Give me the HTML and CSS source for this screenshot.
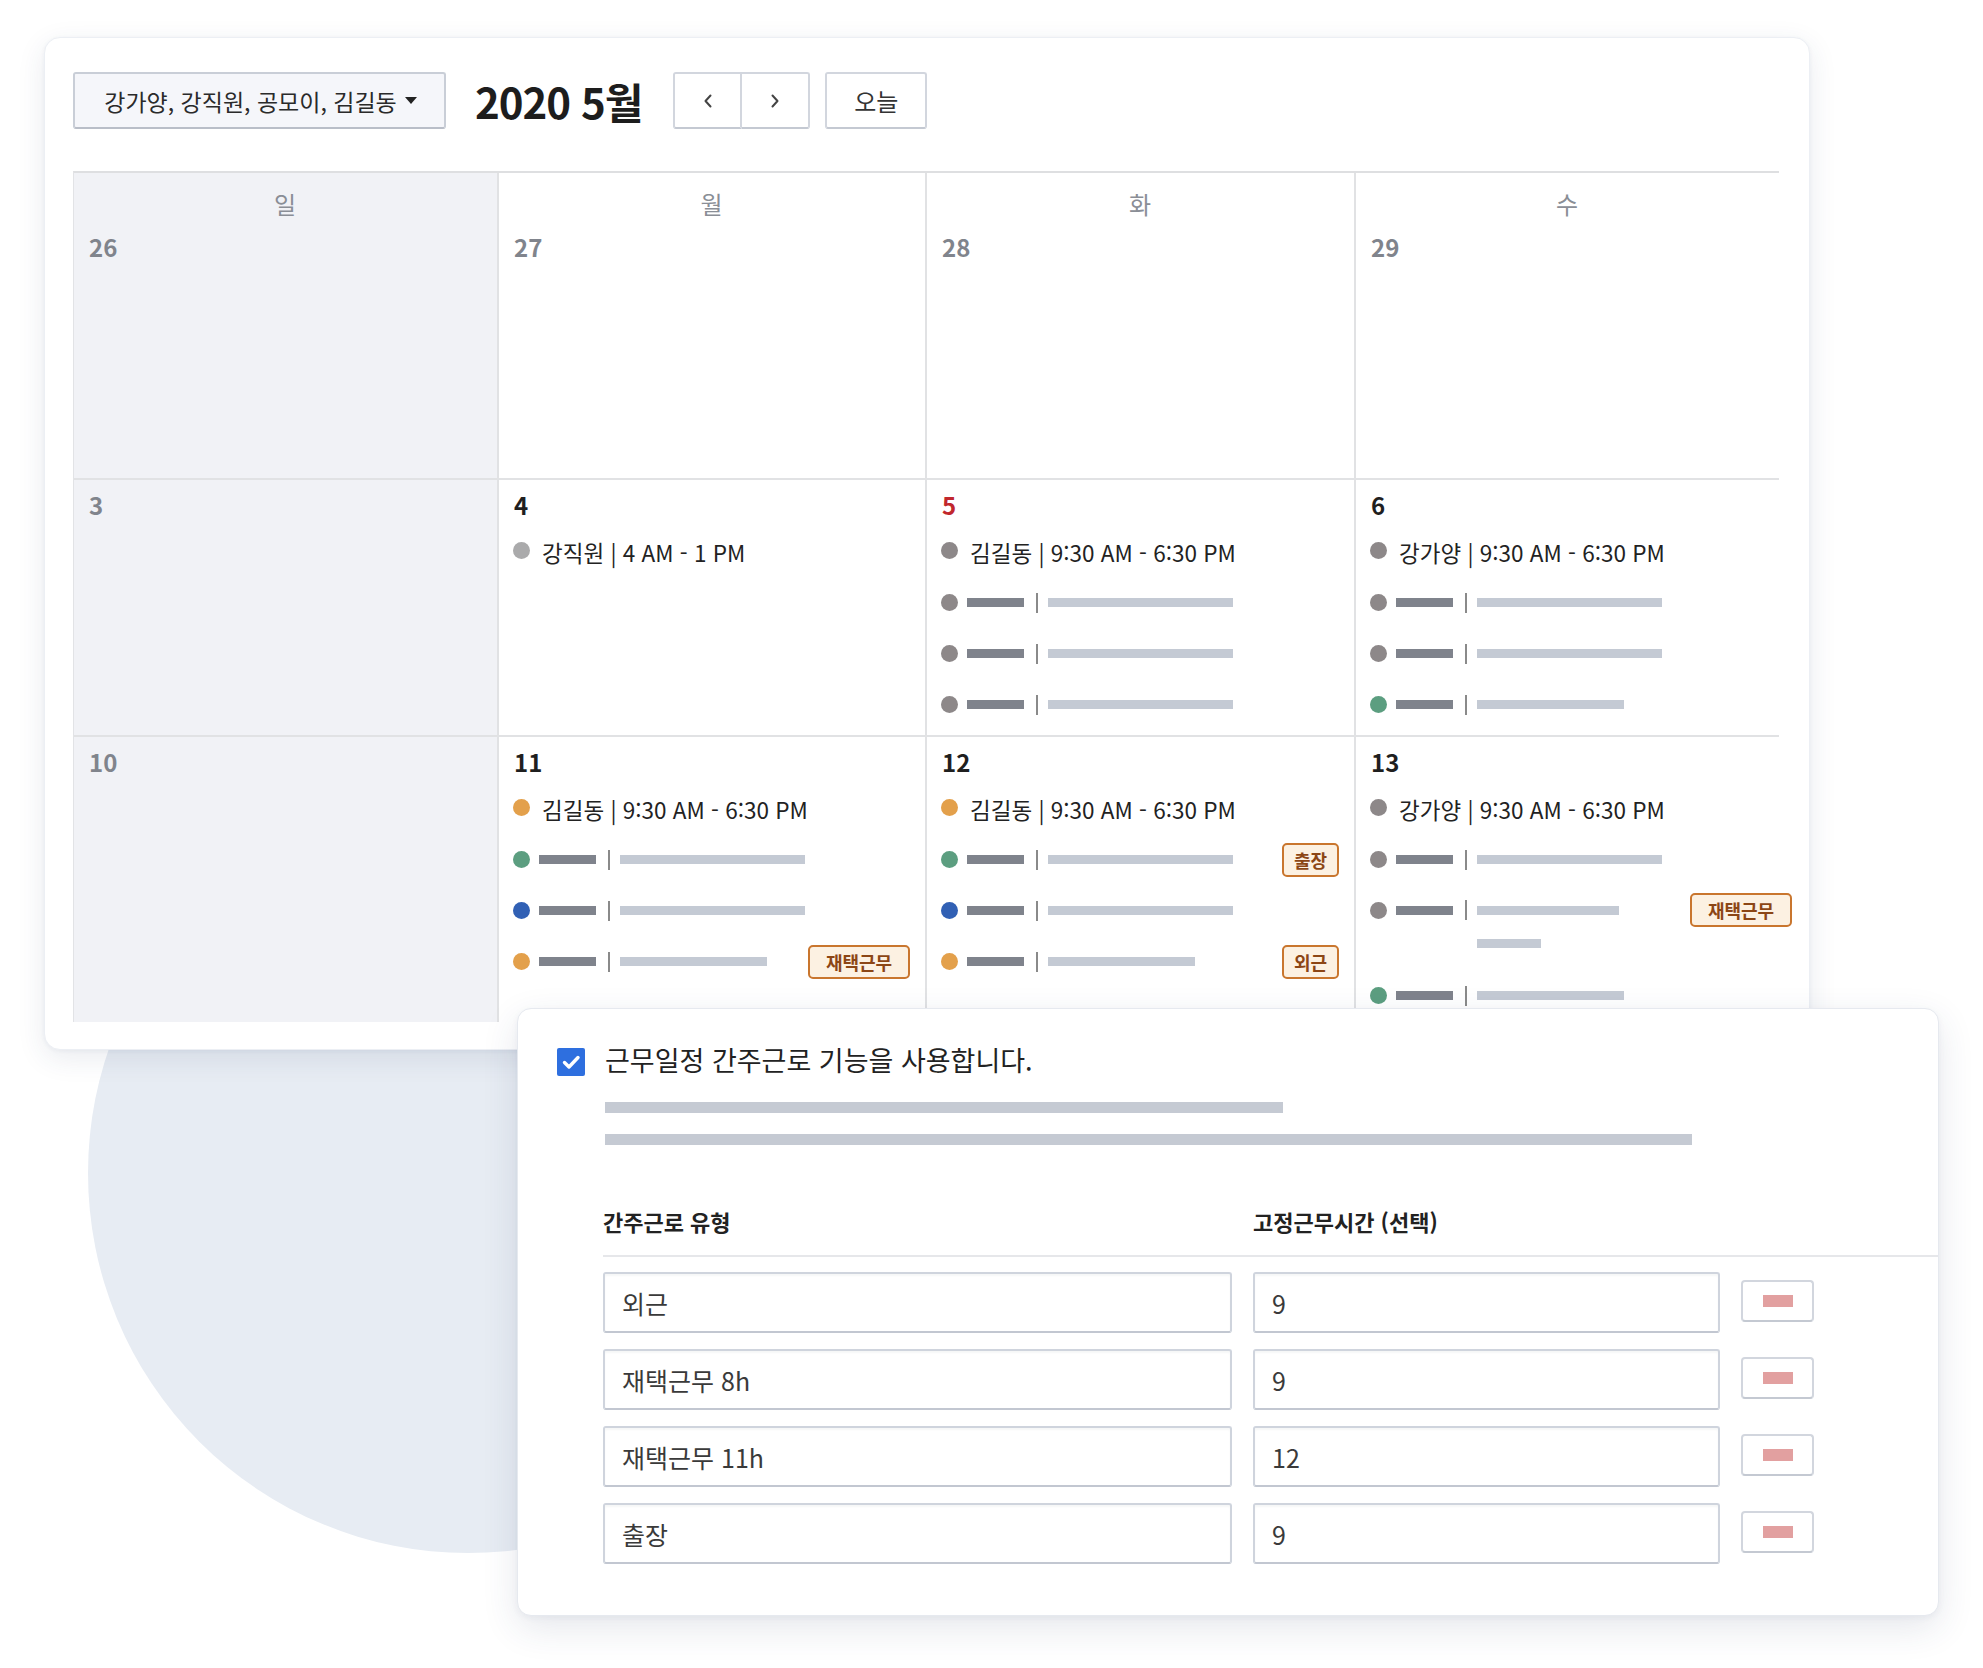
FILE: index.html
```html
<!DOCTYPE html>
<html lang="ko">
<head>
<meta charset="utf-8">
<title>근무일정 캘린더</title>
<link rel="stylesheet" href="styles.css">
</head>
<body>
<div class="stage">
  <div class="bg-circle"></div>

  <section class="calendar">
    <div class="toolbar">
      <button class="member-select">강가양, 강직원, 공모이, 김길동<svg class="caret" viewBox="0 0 12 8" width="12" height="8"><path d="M0 0 H12 L6 7 Z" fill="#222"/></svg></button>
      <h1 class="month-title">2020 5월</h1>
      <div class="nav-group">
        <button class="nav-btn"><svg viewBox="0 0 10 16" width="10" height="16"><polyline points="7.5,2.5 2.5,8 7.5,13.5" fill="none" stroke="#444" stroke-width="2" stroke-linecap="round" stroke-linejoin="round"/></svg></button>
        <button class="nav-btn"><svg viewBox="0 0 10 16" width="10" height="16"><polyline points="2.5,2.5 7.5,8 2.5,13.5" fill="none" stroke="#444" stroke-width="2" stroke-linecap="round" stroke-linejoin="round"/></svg></button>
      </div>
      <button class="today-btn">오늘</button>
    </div>

    <div class="month-grid">
      <!-- week 1 -->
      <div class="cell cell--sun cell--first">
        <div class="dow">일</div>
        <div class="date date--muted">26</div>
      </div>
      <div class="cell cell--first">
        <div class="dow">월</div>
        <div class="date date--muted">27</div>
      </div>
      <div class="cell cell--first">
        <div class="dow">화</div>
        <div class="date date--muted">28</div>
      </div>
      <div class="cell cell--first cell--last-col">
        <div class="dow">수</div>
        <div class="date date--muted">29</div>
      </div>

      <!-- week 2 -->
      <div class="cell cell--sun">
        <div class="date date--muted">3</div>
      </div>
      <div class="cell">
        <div class="date">4</div>
        <div class="events">
          <div class="event event--text"><span class="dot dot--light"></span><span class="event-text">강직원 | 4 AM - 1 PM</span></div>
        </div>
      </div>
      <div class="cell">
        <div class="date date--holiday">5</div>
        <div class="events">
          <div class="event event--text"><span class="dot dot--gray"></span><span class="event-text">김길동 | 9:30 AM - 6:30 PM</span></div>
          <div class="event"><span class="dot dot--gray"></span><span class="bar-dark"></span><span class="sep"></span><span class="bar-light bar-light--long"></span></div>
          <div class="event"><span class="dot dot--gray"></span><span class="bar-dark"></span><span class="sep"></span><span class="bar-light bar-light--long"></span></div>
          <div class="event"><span class="dot dot--gray"></span><span class="bar-dark"></span><span class="sep"></span><span class="bar-light bar-light--long"></span></div>
        </div>
      </div>
      <div class="cell cell--last-col">
        <div class="date">6</div>
        <div class="events">
          <div class="event event--text"><span class="dot dot--gray"></span><span class="event-text">강가양 | 9:30 AM - 6:30 PM</span></div>
          <div class="event"><span class="dot dot--gray"></span><span class="bar-dark"></span><span class="sep"></span><span class="bar-light bar-light--long"></span></div>
          <div class="event"><span class="dot dot--gray"></span><span class="bar-dark"></span><span class="sep"></span><span class="bar-light bar-light--long"></span></div>
          <div class="event"><span class="dot dot--green"></span><span class="bar-dark"></span><span class="sep"></span><span class="bar-light bar-light--mid"></span></div>
        </div>
      </div>

      <!-- week 3 -->
      <div class="cell cell--sun cell--last-row">
        <div class="date date--muted">10</div>
      </div>
      <div class="cell cell--last-row">
        <div class="date">11</div>
        <div class="events">
          <div class="event event--text"><span class="dot dot--orange"></span><span class="event-text">김길동 | 9:30 AM - 6:30 PM</span></div>
          <div class="event"><span class="dot dot--green"></span><span class="bar-dark"></span><span class="sep"></span><span class="bar-light bar-light--long"></span></div>
          <div class="event"><span class="dot dot--blue"></span><span class="bar-dark"></span><span class="sep"></span><span class="bar-light bar-light--long"></span></div>
          <div class="event"><span class="dot dot--orange"></span><span class="bar-dark"></span><span class="sep"></span><span class="bar-light bar-light--mid"></span><span class="badge badge--wide">재택근무</span></div>
        </div>
      </div>
      <div class="cell cell--last-row">
        <div class="date">12</div>
        <div class="events">
          <div class="event event--text"><span class="dot dot--orange"></span><span class="event-text">김길동 | 9:30 AM - 6:30 PM</span></div>
          <div class="event"><span class="dot dot--green"></span><span class="bar-dark"></span><span class="sep"></span><span class="bar-light bar-light--long"></span><span class="badge">출장</span></div>
          <div class="event"><span class="dot dot--blue"></span><span class="bar-dark"></span><span class="sep"></span><span class="bar-light bar-light--long"></span></div>
          <div class="event"><span class="dot dot--orange"></span><span class="bar-dark"></span><span class="sep"></span><span class="bar-light bar-light--mid"></span><span class="badge">외근</span></div>
        </div>
      </div>
      <div class="cell cell--last-row cell--last-col">
        <div class="date">13</div>
        <div class="events">
          <div class="event event--text"><span class="dot dot--gray"></span><span class="event-text">강가양 | 9:30 AM - 6:30 PM</span></div>
          <div class="event"><span class="dot dot--gray"></span><span class="bar-dark"></span><span class="sep"></span><span class="bar-light bar-light--long"></span></div>
          <div class="event event--wrap"><span class="dot dot--gray"></span><span class="bar-dark"></span><span class="sep"></span><span class="bar-stack"><span class="bar-light bar-light--short"></span><span class="bar-light bar-light--tiny"></span></span><span class="badge badge--wide badge--overflow">재택근무</span></div>
          <div class="event"><span class="dot dot--green"></span><span class="bar-dark"></span><span class="sep"></span><span class="bar-light bar-light--mid"></span></div>
        </div>
      </div>
    </div>
  </section>

  <section class="setting-panel">
    <label class="check-row">
      <span class="checkbox"><svg viewBox="0 0 28 28" width="28" height="28"><path d="M7.5 14.5 L12 19 L21 9.5" fill="none" stroke="#fff" stroke-width="3.4" stroke-linecap="round" stroke-linejoin="round"/></svg></span>
      <span class="check-label">근무일정 간주근로 기능을 사용합니다.</span>
    </label>
    <div class="desc-bars">
      <span class="desc-bar desc-bar--one"></span>
      <span class="desc-bar desc-bar--two"></span>
    </div>

    <div class="type-table">
      <div class="type-head">
        <span>간주근로 유형</span>
        <span>고정근무시간 (선택)</span>
      </div>
      <div class="type-rows">
        <div class="type-row">
          <div class="field">외근</div>
          <div class="field">9</div>
          <button class="remove-btn"><span class="remove-mark"></span></button>
        </div>
        <div class="type-row">
          <div class="field">재택근무 8h</div>
          <div class="field">9</div>
          <button class="remove-btn"><span class="remove-mark"></span></button>
        </div>
        <div class="type-row">
          <div class="field">재택근무 11h</div>
          <div class="field">12</div>
          <button class="remove-btn"><span class="remove-mark"></span></button>
        </div>
        <div class="type-row">
          <div class="field">출장</div>
          <div class="field">9</div>
          <button class="remove-btn"><span class="remove-mark"></span></button>
        </div>
      </div>
    </div>
  </section>
</div>
</body>
</html>
```

FILE: styles.css
```css
* { box-sizing: border-box; }

html, body {
  margin: 0;
  padding: 0;
  width: 1983px;
  height: 1668px;
  overflow: hidden;
  background: #ffffff;
  font-family: "Noto Sans CJK KR", "Noto Sans", "Liberation Sans", sans-serif;
  color: #222;
}

.stage {
  position: relative;
  width: 1983px;
  height: 1668px;
  padding: 37px 0 0 44px;
}

.bg-circle {
  position: absolute;
  left: 88px;
  top: 793px;
  width: 760px;
  height: 760px;
  border-radius: 50%;
  background: #e7ecf3;
  z-index: 0;
}

/* ---------- calendar card ---------- */
.calendar {
  position: relative;
  z-index: 1;
  width: 1766px;
  height: 1013px;
  padding: 34px 0 0 28px;
  background: #fff;
  border: 1px solid #eceff4;
  border-radius: 16px;
  box-shadow: 0 8px 28px rgba(40, 60, 100, 0.10), 0 1px 4px rgba(40, 60, 100, 0.05);
}

.toolbar {
  display: flex;
  align-items: center;
  height: 57px;
}

button {
  font-family: inherit;
  margin: 0;
  cursor: pointer;
}

.member-select {
  display: flex;
  align-items: center;
  justify-content: center;
  gap: 8px;
  width: 373px;
  height: 57px;
  padding: 0 0 0 2px;
  background: #f5f6fa;
  border: 2px solid #c9ced7;
  border-bottom-color: #b9bec8;
  border-radius: 3px;
  font-size: 23px;
  color: #2a2a2a;
}

.caret { display: block; margin-top: 1px; }

.month-title {
  margin: 0 0 0 29px;
  font-size: 42px;
  font-weight: 700;
  color: #1d1d1d;
  line-height: 57px;
  letter-spacing: -1px;
}

.nav-group {
  display: flex;
  margin-left: 31px;
  height: 57px;
}

.nav-btn {
  display: flex;
  align-items: center;
  justify-content: center;
  width: 69px;
  height: 57px;
  padding: 0;
  background: #fff;
  border: 2px solid #d2d6de;
  border-bottom-color: #c4c9d2;
  border-radius: 3px 0 0 3px;
}
.nav-btn + .nav-btn {
  border-left: none;
  border-radius: 0 3px 3px 0;
  width: 68px;
}
.nav-btn:first-child { border-right: 2px solid #d2d6de; }

.today-btn {
  width: 102px;
  height: 57px;
  margin-left: 15px;
  padding: 0;
  background: #fff;
  border: 2px solid #d2d6de;
  border-bottom-color: #c4c9d2;
  border-radius: 3px;
  font-size: 24px;
  color: #333;
}

/* ---------- month grid ---------- */
.month-grid {
  display: grid;
  grid-template-columns: 425px 428px 429px 423px;
  grid-template-rows: 307px 257px 285px;
  width: 1706px;
  margin-top: 42px;
  border-top: 2px solid #dedfe1;
  border-left: 1px solid #e2e3e6;
}

.cell {
  position: relative;
  padding: 9px 15px 0 14px;
  border-right: 2px solid #e1e2e4;
  border-bottom: 2px solid #e1e2e4;
  background: #fff;
}
.cell--sun { background: #f1f2f6; }
.cell--last-col { border-right: none; }
.cell--last-row { border-bottom: none; }
.cell--first { padding-top: 16px; }

.dow {
  text-align: center;
  font-size: 24px;
  line-height: 30px;
  color: #8a8e96;
  margin-bottom: 12px;
}

.date {
  font-size: 24px;
  line-height: 32px;
  font-weight: 700;
  color: #1f1f1f;
  padding-left: 1px;
}
.date--muted { color: #80848c; }
.date--holiday { color: #c1272d; }

.events {
  margin-top: 12px;
  display: flex;
  flex-direction: column;
}

.event {
  display: flex;
  align-items: center;
  height: 51px;
}
.event--text {
  height: 44px;
  padding-bottom: 6px;
}

.dot {
  flex: none;
  width: 17px;
  height: 17px;
  border-radius: 50%;
  margin-right: 9px;
}
.event--text .dot { margin-right: 12px; margin-top: -3px; }
.dot--gray { background: #8d8889; }
.dot--light { background: #aaaaab; }
.dot--orange { background: #e3a04b; }
.dot--green { background: #5c9e80; }
.dot--blue { background: #3160b4; }

.event-text {
  font-size: 22.5px;
  line-height: 30px;
  color: #222;
  white-space: nowrap;
}

.bar-dark {
  flex: none;
  width: 57px;
  height: 9px;
  background: #7f838c;
}
.sep {
  flex: none;
  width: 2px;
  height: 20px;
  background: #8a8a8a;
  margin: 0 10px 0 12px;
}
.bar-light {
  display: block;
  flex: none;
  height: 9px;
  background: #c4cad4;
}
.bar-light--long { width: 185px; }
.bar-light--mid { width: 147px; }
.bar-light--short { width: 142px; }
.bar-light--tiny { width: 64px; }

.bar-stack {
  display: flex;
  flex-direction: column;
  gap: 24px;
  flex: none;
}

.event--wrap {
  align-items: flex-start;
  height: 85px;
}
.event--wrap .dot { margin-top: 17px; }
.event--wrap .bar-dark { margin-top: 21px; }
.event--wrap .sep { margin-top: 15px; }
.event--wrap .bar-stack { margin-top: 21px; }
.event--wrap .badge { margin-top: 8px; }

.badge {
  flex: none;
  margin-left: auto;
  width: 57px;
  height: 34px;
  padding: 0;
  display: flex;
  align-items: center;
  justify-content: center;
  background: #fcf1e2;
  border: 2px solid #c9762e;
  border-radius: 5px;
  font-size: 18px;
  font-weight: 700;
  color: #8c4615;
  line-height: 1;
}
.badge--wide { width: 102px; }
.badge--overflow { margin-right: -28px; }

/* ---------- setting panel ---------- */
.setting-panel {
  position: absolute;
  z-index: 2;
  left: 517px;
  top: 1008px;
  width: 1422px;
  height: 608px;
  padding: 39px 0 0 39px;
  background: #fff;
  border: 1px solid #e6e9ef;
  border-radius: 14px;
  box-shadow: 0 12px 36px rgba(40, 60, 100, 0.12), 0 2px 6px rgba(40, 60, 100, 0.05);
}

.check-row {
  display: flex;
  align-items: center;
  gap: 20px;
  height: 28px;
}

.checkbox {
  display: block;
  width: 28px;
  height: 28px;
  background: #2e6fdf;
  border-radius: 2px;
}
.checkbox svg { display: block; }

.check-label {
  font-size: 27px;
  line-height: 34px;
  color: #222;
  margin-top: -4px;
}

.desc-bars {
  display: flex;
  flex-direction: column;
  gap: 21px;
  margin: 26px 0 0 48px;
}
.desc-bar {
  display: block;
  height: 11px;
  background: #c5cad3;
}
.desc-bar--one { width: 678px; }
.desc-bar--two { width: 1087px; }

.type-table {
  margin: 61px 0 0 46px;
}

.type-head {
  display: grid;
  grid-template-columns: 629px 467px;
  column-gap: 21px;
  height: 30px;
  font-size: 22px;
  line-height: 30px;
  font-weight: 700;
  color: #222;
}

.type-rows {
  margin-top: 19px;
  padding-top: 15px;
  border-top: 2px solid #e6e7ea;
  display: flex;
  flex-direction: column;
  gap: 16px;
}

.type-row {
  display: grid;
  grid-template-columns: 629px 467px 73px;
  column-gap: 21px;
  align-items: center;
}

.field {
  height: 61px;
  padding: 0 17px;
  display: flex;
  align-items: center;
  border: 2px solid #cfd4dd;
  border-bottom-color: #c2c7d1;
  border-radius: 3px;
  box-shadow: inset 0 2px 2px rgba(30, 40, 60, 0.04);
  font-size: 25px;
  color: #3a3a3a;
  background: #fff;
}

.remove-btn {
  width: 73px;
  height: 42px;
  padding: 0;
  display: flex;
  align-items: center;
  justify-content: center;
  background: #fff;
  border: 2px solid #d2d6de;
  border-bottom-color: #c4c9d2;
  border-radius: 4px;
  margin-top: -4px;
}

.remove-mark {
  display: block;
  width: 30px;
  height: 12px;
  background: #e2a0a0;
}
```
